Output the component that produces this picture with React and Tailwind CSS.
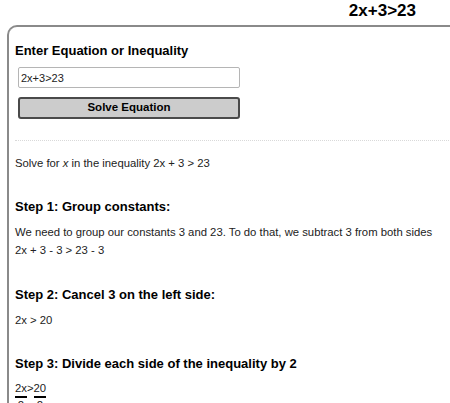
export default function App() {
  return (
    <div className="w-[450px] h-[403px] overflow-hidden bg-white text-[#222] font-['Liberation_Sans',Arial,sans-serif]">
      <div className="h-[25px] flex justify-end pr-[34px] pt-[1px]">
        <h1 className="text-[17px] font-bold leading-[20px] text-black">2x+3&gt;23</h1>
      </div>
      <div className="ml-[7px] w-[520px] border-t-2 border-l-2 border-[#8a8a8a] rounded-tl-[10px] pl-[6px] pt-[16px] h-[400px]">
        <div className="text-[13px] font-bold leading-[16px] text-black">Enter Equation or Inequality</div>
        <div className="pl-[3px] mt-[8px] flex flex-col gap-[9px] w-[225px]">
          <input
            defaultValue="2x+3>23"
            className="h-[21px] w-[222px] border border-[#b5b5b5] rounded-[2px] px-[2px] text-[11px] text-[#222] outline-none"
          />
          <button className="h-[22px] w-[222px] bg-[#cccccc] border-2 border-[#4a4a4a] rounded-[3px] text-[11.5px] font-bold text-black leading-none">
            Solve Equation
          </button>
        </div>
        <div className="mt-[21px] border-t border-dotted border-[#d9d9d9]"></div>
        <p className="mt-[14px] text-[11.3px] leading-[16px]">
          Solve for <i>x</i> in the inequality 2x + 3 &gt; 23
        </p>
        <h3 className="mt-[28px] text-[13px] font-bold leading-[16px] text-black">Step 1: Group constants:</h3>
        <p className="mt-[8px] text-[11.3px] leading-[18px]">
          We need to group our constants 3 and 23. To do that, we subtract 3 from both sides
          <br />
          2x + 3 - 3 &gt; 23 - 3
        </p>
        <h3 className="mt-[28px] text-[13px] font-bold leading-[16px] text-black">Step 2: Cancel 3 on the left side:</h3>
        <p className="mt-[8px] text-[11.3px] leading-[18px]">2x &gt; 20</p>
        <h3 className="mt-[27px] text-[13px] font-bold leading-[16px] text-black">
          Step 3: Divide each side of the inequality by 2
        </h3>
        <div className="mt-[9px] flex items-start text-[11.3px] leading-[15px]">
          <span className="inline-flex flex-col items-center">
            <span className="border-b-2 border-black">2x</span>
            <span>2</span>
          </span>
          <span>&gt;</span>
          <span className="inline-flex flex-col items-center">
            <span className="border-b-2 border-black">20</span>
            <span>2</span>
          </span>
        </div>
      </div>
    </div>
  );
}
